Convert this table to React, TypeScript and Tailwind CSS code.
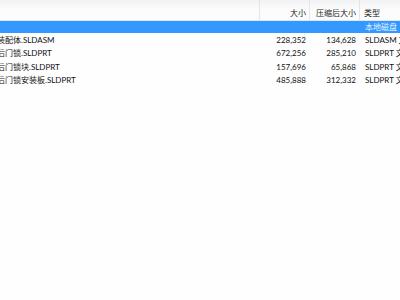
const rows = [
  { name: '装配体.SLDASM', size: '228,352', packed: '134,628', type: 'SLDASM 文件' },
  { name: '后门锁.SLDPRT', size: '672,256', packed: '285,210', type: 'SLDPRT 文件' },
  { name: '后门锁块.SLDPRT', size: '157,696', packed: '65,868', type: 'SLDPRT 文件' },
  { name: '后门锁安装板.SLDPRT', size: '485,888', packed: '312,332', type: 'SLDPRT 文件' },
]

export default function App() {
  return (
    <div
      className="w-[400px] h-[300px] overflow-hidden bg-[#fefefe] text-[8px] text-[#111111]"
      style={{ fontFamily: 'Lato, "Noto Sans CJK SC", sans-serif' }}
    >
      <div className="flex h-[21px] border-b border-[#e3e6ea] bg-gradient-to-b from-[#f1f2f4] via-[#fdfdfd] to-[#fbfbfb] leading-[8px] text-[#222222]">
        <div className="w-[260px] shrink-0 border-r border-[#e5e5e5]" />
        <div className="w-[50px] shrink-0 border-r border-[#e5e5e5] pr-[3px] pt-[9px] text-right">大小</div>
        <div className="w-[50px] shrink-0 border-r border-[#e5e5e5] pr-[3px] pt-[9px] text-right whitespace-nowrap">压缩后大小</div>
        <div className="flex-1 pl-[4px] pt-[9px] whitespace-nowrap">类型</div>
      </div>

      <div className="flex h-[12px] bg-[#3399ff] text-[#e6f2ff] leading-[12px]">
        <div className="w-[360px] shrink-0" />
        <div className="flex-1 pl-[5px] whitespace-nowrap">本地磁盘</div>
      </div>

      <div className="pt-[1px]">
        {rows.map((r) => (
          <div key={r.name} className="flex h-[13.4px] leading-[13px] whitespace-nowrap">
            <div className="w-[260px] shrink-0 overflow-hidden">
              <span className="ml-[-3px] inline-block">{r.name}</span>
            </div>
            <div className="w-[50px] shrink-0 pr-[4px] text-right">{r.size}</div>
            <div className="w-[50px] shrink-0 pr-[4px] text-right">{r.packed}</div>
            <div className="flex-1 pl-[5px] overflow-hidden">{r.type}</div>
          </div>
        ))}
      </div>
    </div>
  )
}
